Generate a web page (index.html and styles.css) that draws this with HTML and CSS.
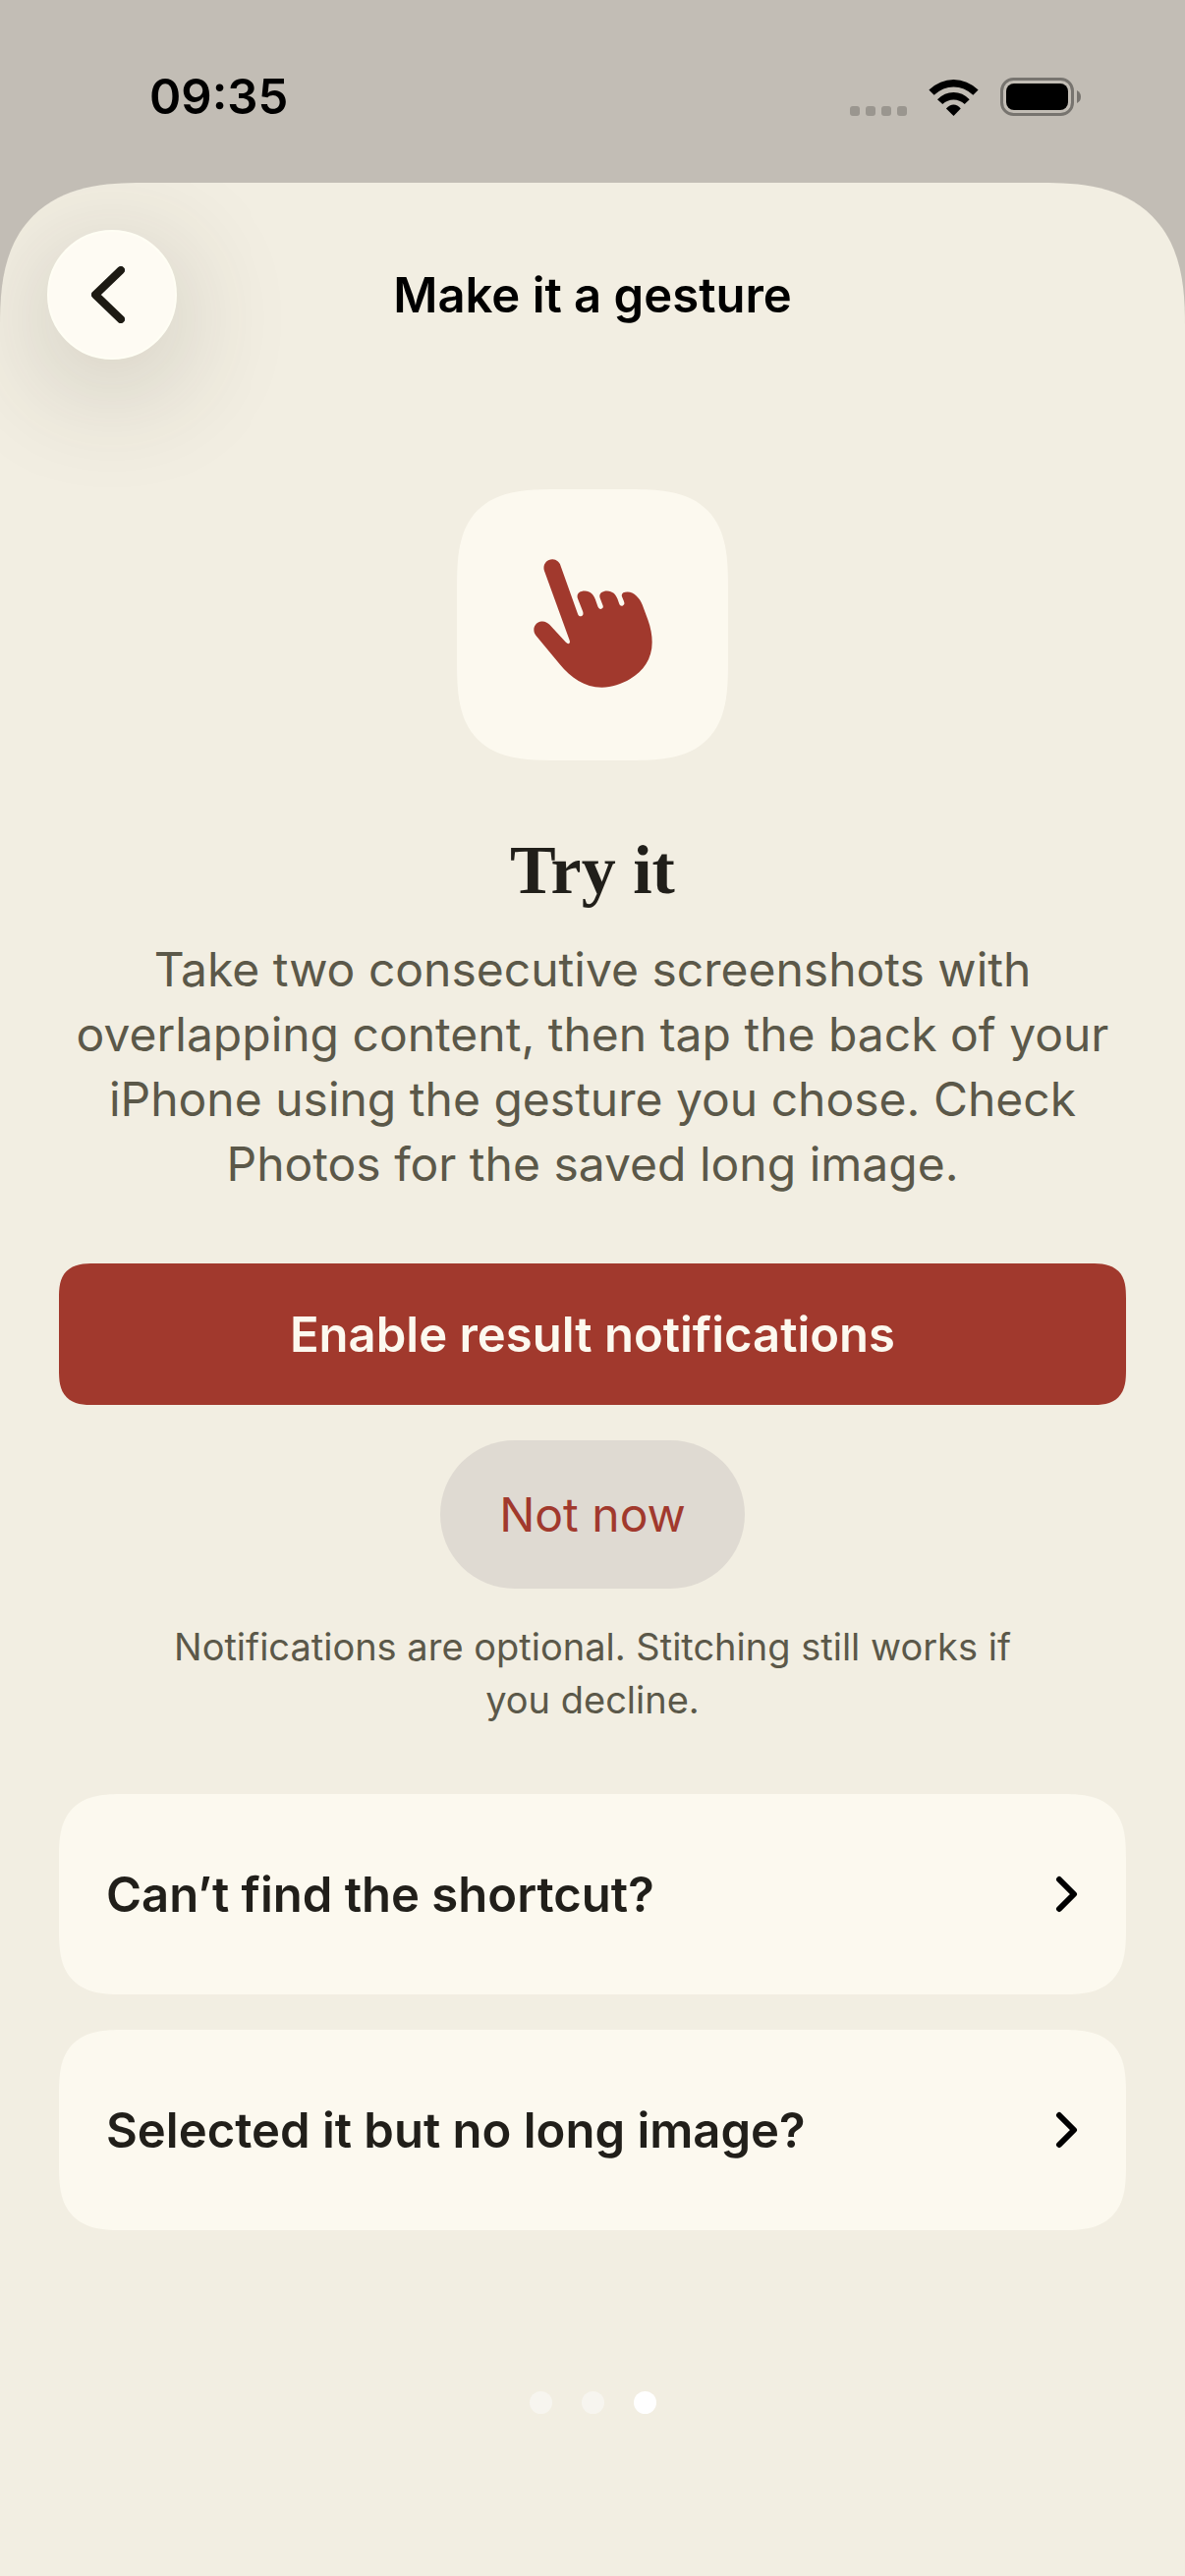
FILE: index.html
```
<!DOCTYPE html>
<html lang="en">
<head>
	<meta charset="UTF-8">
	<meta name="viewport" content="width=device-width, initial-scale=1">
	<title>Make it a gesture</title>
	<link rel="stylesheet" href="styles.css">
</head>
<body>
	<div class="status-bar">
		<span class="time">09:35</span>
		<div class="status-icons">
			<svg class="signal" viewBox="0 0 58 10" aria-hidden="true">
				<rect x="0" width="10" height="10" rx="3"/>
				<rect x="16" width="10" height="10" rx="3"/>
				<rect x="32" width="10" height="10" rx="3"/>
				<rect x="48" width="10" height="10" rx="3"/>
			</svg>
			<svg class="wifi" viewBox="316 56 152 112" aria-hidden="true">
				<path d="M316 88Q350 56 392 56T468 88L452 104Q425 79 392 79T332 104Z"/>
				<path d="M342 117Q364 95 392 95T441 117L426 132Q411 118 392 118T358 132Z"/>
				<path d="M369 145Q380 133 392 133T414 145L392 168Z"/>
			</svg>
			<svg class="battery" viewBox="0 0 82 39" aria-hidden="true">
				<rect class="battery-case" x="1.5" y="1.5" width="72" height="36" rx="12"/>
				<rect x="6" y="6" width="63" height="27" rx="8"/>
				<path class="battery-tip" d="M78 13q4 2 4 6.5t-4 6.5z"/>
			</svg>
		</div>
	</div>

	<div class="sheet">
		<header class="nav">
			<button class="back" type="button" aria-label="Back">
				<svg viewBox="0 0 34 58"><path d="M30 4L4 29L30 54"/></svg>
			</button>
			<h1>Make it a gesture</h1>
		</header>

		<main>
			<div class="tile">
				<svg viewBox="308 266 364 394" aria-hidden="true">
					<path d="M341 302C335 285 347 267 366 267C378 267 388 276 391 287L443 433C446 442 451 442 454 441C460 439 461 434 459 427L443 386C439 373 448 364 465 364C482 364 492 376 497 389L505 412C508 420 514 420 517 418C522 415 522 411 519 405L511 384C508 373 517 364 533 364C550 364 560 375 565 388L570 402C573 410 578 411 582 408C587 405 587 401 584 394L579 382C575 372 583 367 595 367C614 366 633 385 641 406L658 452C667 477 671 500 671 521C671 572 644 609 604 633C577 649 548 659 517 659C464 659 422 630 388 588L315 500C303 484 310 463 328 458C340 455 349 459 357 467L407 521C412 526 416 526 418 523C420 521 419 518 418 514Z"/>
				</svg>
			</div>
			<h2>Try it</h2>
			<p class="lead">Take two consecutive screenshots with overlapping content, then tap the back of your iPhone using the gesture you chose. Check Photos for the saved long image.</p>
			<button class="enable" type="button">Enable result notifications</button>
			<button class="skip" type="button">Not now</button>
			<p class="note">Notifications are optional. Stitching still works if you decline.</p>
			<div class="help">
				<button class="card" type="button">
					<span>Can’t find the shortcut?</span>
					<svg viewBox="0 0 24 38"><path d="M4 4L19 19L4 34"/></svg>
				</button>
				<button class="card" type="button">
					<span>Selected it but no long image?</span>
					<svg viewBox="0 0 24 38"><path d="M4 4L19 19L4 34"/></svg>
				</button>
			</div>
		</main>

		<div class="dots">
			<span></span>
			<span></span>
			<span class="on"></span>
		</div>
	</div>
</body>
</html>
```
FILE: styles.css
```
*{padding:0;margin:0;box-sizing:border-box;}
body{
	display:flex;
	flex-direction:column;
	min-height:100vh;
	background:#c2bdb5;
	font-family:Inter, "Liberation Sans", sans-serif;
	font-size:49px;
	color:#211f1a;
}
button{
	border:none;
	font:inherit;
	color:inherit;
	cursor:pointer;
}
svg{display:block;}

/* status bar */
.status-bar{
	display:flex;
	align-items:center;
	justify-content:space-between;
	height:186px;
	padding:10px 106px 0 152px;
	color:#000;
}
.time{font-weight:600;}
.status-icons{
	display:flex;
	align-items:flex-end;
	gap:22px;
}
.signal{
	width:58px;
	height:10px;
	fill:#9a968f;
}
.wifi{width:51px;height:37px;}
.battery{width:82px;height:39px;}
.battery-case{
	fill:none;
	stroke:#77746f;
	stroke-width:3;
}
.battery-tip{fill:#77746f;}

/* sheet */
.sheet{
	display:flex;
	flex-direction:column;
	flex:1;
	padding:48px 0 165px;
	border-radius:116px 116px 0 0;
	background:#f2eee2;
	overflow:hidden;
}
.nav{
	display:grid;
	grid-template-columns:132px 1fr 132px;
	align-items:center;
	padding:0 48px;
}
.nav h1{
	font-size:49px;
	font-weight:600;
	color:#000;
	text-align:center;
}
.back{
	display:flex;
	align-items:center;
	justify-content:center;
	width:132px;
	height:132px;
	padding-right:9px;
	border:2px solid #fffef4;
	border-radius:50%;
	background:#fefbf3;
	box-shadow:0 24px 120px rgba(60,56,40,.24);
}
.back svg{width:34px;height:58px;}
.back path,.card path{
	fill:none;
	stroke:#1d1a13;
	stroke-width:8;
	stroke-linecap:round;
	stroke-linejoin:round;
}

main{
	display:flex;
	flex-direction:column;
	align-items:center;
	padding:132px 60px 0;
}
.tile{
	display:flex;
	align-items:center;
	justify-content:center;
	width:276px;
	height:276px;
	padding-bottom:4px;
	border-radius:76px;
	background:#fcf9ef;
}
.tile svg{
	width:121px;
	height:131px;
	fill:#a1392d;
}
h2{
	margin-top:72px;
	font-family:"Liberation Serif", serif;
	font-size:70px;
	line-height:80px;
}
.lead{
	margin-top:28px;
	font-size:48px;
	line-height:66px;
	text-align:center;
	color:#5b5849;
}
.enable{
	width:100%;
	height:144px;
	margin-top:68px;
	border-radius:30px;
	background:#a1392d;
	font-weight:600;
	color:#fcf9ef;
}
.skip{
	height:151px;
	margin-top:36px;
	padding:0 60px;
	border-radius:76px;
	background:#dfdad2;
	font-size:48px;
	color:#a1392d;
}
.note{
	max-width:900px;
	margin-top:32px;
	font-size:38px;
	line-height:54px;
	text-align:center;
	color:#5b5849;
}
.help{
	display:flex;
	flex-direction:column;
	gap:36px;
	width:100%;
	margin-top:69px;
}
.card{
	display:flex;
	align-items:center;
	justify-content:space-between;
	height:204px;
	padding:0 48px;
	border-radius:52px;
	background:#fcf9ef;
	font-weight:600;
}
.card svg{width:24px;height:38px;}
.card path{stroke:#000;stroke-width:6;}

/* page dots */
.dots{
	display:flex;
	justify-content:center;
	gap:30px;
	margin-top:auto;
}
.dots span{
	width:23px;
	height:23px;
	border-radius:50%;
	background:#f7f5ef;
}
.dots .on{background:#fff;}

/* smoother corners where the browser can draw them */
@supports (corner-shape:superellipse(1.5)){
	.sheet{
		border-radius:146px 146px 0 0;
		corner-shape:superellipse(1.4);
	}
	.tile{border-radius:104px;corner-shape:superellipse(1.6);}
	.enable{border-radius:36px;corner-shape:superellipse(1.5);}
	.card{border-radius:66px;corner-shape:superellipse(1.5);}
}
```
